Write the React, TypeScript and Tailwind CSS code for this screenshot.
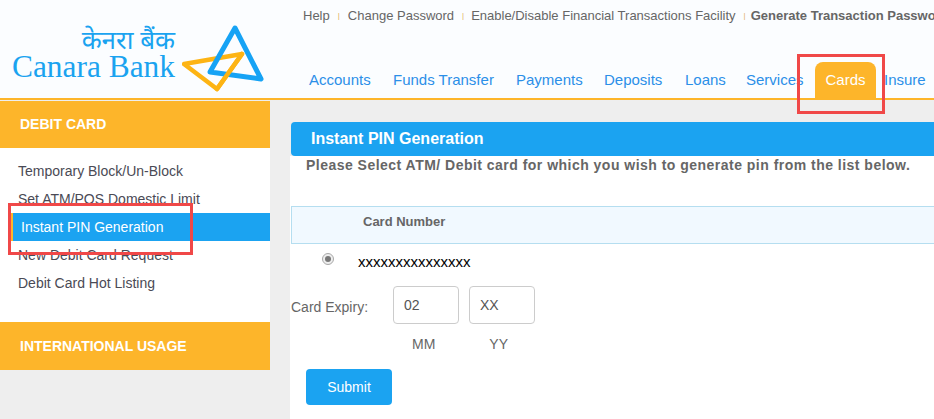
import React from 'react';

const font = { fontFamily: '"Liberation Sans", Arial, sans-serif' };

const navItems = [
  { label: 'Accounts', cls: 'w-[84px]' },
  { label: 'Funds Transfer', cls: 'w-[123px]' },
  { label: 'Payments', cls: 'w-[88px]' },
  { label: 'Deposits', cls: 'w-[81px]' },
  { label: 'Loans', cls: 'w-[61px]' },
  { label: 'Services', cls: 'w-[69px]' },
];

const sideLinks = ['Temporary Block/Un-Block', 'Set ATM/POS Domestic Limit', 'Instant PIN Generation', 'New Debit Card Request', 'Debit Card Hot Listing'];

const Logo = () => (
  <div className="flex items-start pl-[13px] pt-[24px]">
    <div className="flex flex-col items-end w-[163px] pr-[1px] pt-[7px]">
      <div className="text-[26px] leading-[24px] text-[#1aa3f0]" style={{ fontFamily: '"Noto Sans Devanagari", "Noto Sans", "Liberation Serif", serif' }}>केनरा बैंक</div>
      <div className="text-[31.4px] leading-[24px] text-[#1aa3f0] whitespace-nowrap" style={{ fontFamily: '"Liberation Serif", serif' }}>Canara Bank</div>
    </div>
    <svg width="84" height="68" viewBox="0 0 84 68" className="ml-[6px] shrink-0">
      <path d="M2 40 L60 30 L35 65 Z" fill="none" stroke="#fdb414" strokeWidth="4.5" strokeLinejoin="round" />
      <path d="M53 4 L79 55 L28 48 Z" fill="none" stroke="#16a3f5" strokeWidth="5" strokeLinejoin="round" />
      <path d="M60 30 L35 65" fill="none" stroke="#fdb414" strokeWidth="4.5" strokeLinecap="round" />
    </svg>
  </div>
);

const Sep = () => <span className="mx-[8px] text-[8px] text-[#e0b060]">|</span>;

export default function App() {
  return (
    <div className="relative w-[934px] h-[419px] overflow-hidden bg-[#eeeeee]" style={font}>
      {/* Header */}
      <header className="flex h-[100px] bg-[#fbfdff] border-b-2 border-[#fdb52a]">
        <div className="w-[290px] shrink-0"><Logo /></div>
        <div className="flex-1 min-w-0 flex flex-col justify-between">
          <div className="flex items-center pl-[13px] pt-[8px] text-[13px] leading-[16px] text-[#666666] whitespace-nowrap">
            <span>Help</span><Sep />
            <span>Change Password</span><Sep />
            <span className="-ml-[1px]">Enable/Disable Financial Transactions Facility</span><Sep />
            <span className="-ml-[3px] font-bold">Generate Transaction Password</span>
          </div>
          <nav className="flex items-end pl-[19px] whitespace-nowrap text-[15px] text-[#2b8fe8]">
            {navItems.map((n) => (
              <span key={n.label} className={`${n.cls} h-[36px] leading-[36px] shrink-0`}>{n.label}</span>
            ))}
            <span className="w-[61px] h-[36px] leading-[36px] text-center text-white bg-[#fdb52a] rounded-t-[8px] shrink-0">Cards</span>
            <span className="ml-[8px] h-[36px] leading-[36px]">Insure</span>
          </nav>
        </div>
      </header>

      <div className="flex pt-[1px]">
        {/* Sidebar */}
        <aside className="w-[270px] shrink-0">
          <div className="h-[47px] leading-[47px] pl-[20px] bg-[#fdb52a] text-white text-[14px] font-bold">DEBIT CARD</div>
          <div className="h-[174px] bg-white pt-[9px] text-[14px] text-[#4a4a55]">
            {sideLinks.map((l) => l === 'Instant PIN Generation' ? (
              <div key={l} className="h-[28px] leading-[28px] ml-[10px] pl-[11px] bg-[#1ba3f1] text-white border-l-[3px] border-[#fdb52a] -indent-[3px]">{l}</div>
            ) : (
              <div key={l} className="h-[28px] leading-[28px] pl-[18px]">{l}</div>
            ))}
          </div>
          <div className="h-[48px] leading-[49px] pl-[20px] bg-[#fdb52a] text-white text-[14px] font-bold">INTERNATIONAL USAGE</div>
        </aside>

        {/* Main */}
        <main className="ml-[20px] flex-1 min-w-0 pt-[21px]">
          <div className="h-[34px] leading-[33px] ml-[1px] pl-[20px] bg-[#1ba3f1] rounded-l-[4px] text-white text-[16px] font-bold">Instant PIN Generation</div>
          <div className="bg-white h-[300px]">
            <p className="pl-[16px] text-[14px] leading-[18px] font-bold text-[#666666] tracking-[0.48px] whitespace-nowrap">Please Select ATM/ Debit card for which you wish to generate pin from the list below.</p>
            <div className="mt-[32px] ml-[1px] h-[38px] leading-[30px] pl-[71px] bg-[#f1f9ff] border border-[#b5def0] border-r-0 text-[13px] font-bold text-[#666666]">Card Number</div>
            <div className="flex items-center h-[37px] pl-[32px]">
              <span className="w-[12px] h-[12px] rounded-full border border-[#a8a8a8] bg-[#eeeeee] flex items-center justify-center -mt-[8px]">
                <span className="w-[6px] h-[6px] rounded-full bg-[#777777]" />
              </span>
              <span className="ml-[24px] text-[15px] text-black">xxxxxxxxxxxxxxx</span>
            </div>
            <div className="flex items-center mt-[5px]">
              <span className="w-[103px] pl-[1px] mt-[4px] text-[14px] text-[#666666] shrink-0">Card Expiry:</span>
              <div className="w-[66px] h-[38px] leading-[36px] pl-[10px] mr-[10px] border border-[#cccccc] rounded-[4px] text-[14px] text-[#555555]">02</div>
              <div className="w-[66px] h-[38px] leading-[36px] pl-[10px] border border-[#cccccc] rounded-[4px] text-[14px] text-[#555555]">XX</div>
            </div>
            <div className="flex mt-[12px] text-[14px] leading-[16px] text-[#666666]">
              <span className="ml-[122px]">MM</span>
              <span className="ml-[54px]">YY</span>
            </div>
            <button className="block ml-[16px] mt-[17px] w-[86px] h-[36px] bg-[#1ba3f1] rounded-[4px] text-white text-[14px]">Submit</button>
          </div>
        </main>
      </div>

      {/* Red annotation boxes */}
      <div className="absolute left-[797px] top-[54px] w-[88px] h-[60px] border-[3px] border-[#f04848]" />
      <div className="absolute left-[8px] top-[203px] w-[185px] h-[52px] border-[3px] border-[#f04848]" />
    </div>
  );
}
